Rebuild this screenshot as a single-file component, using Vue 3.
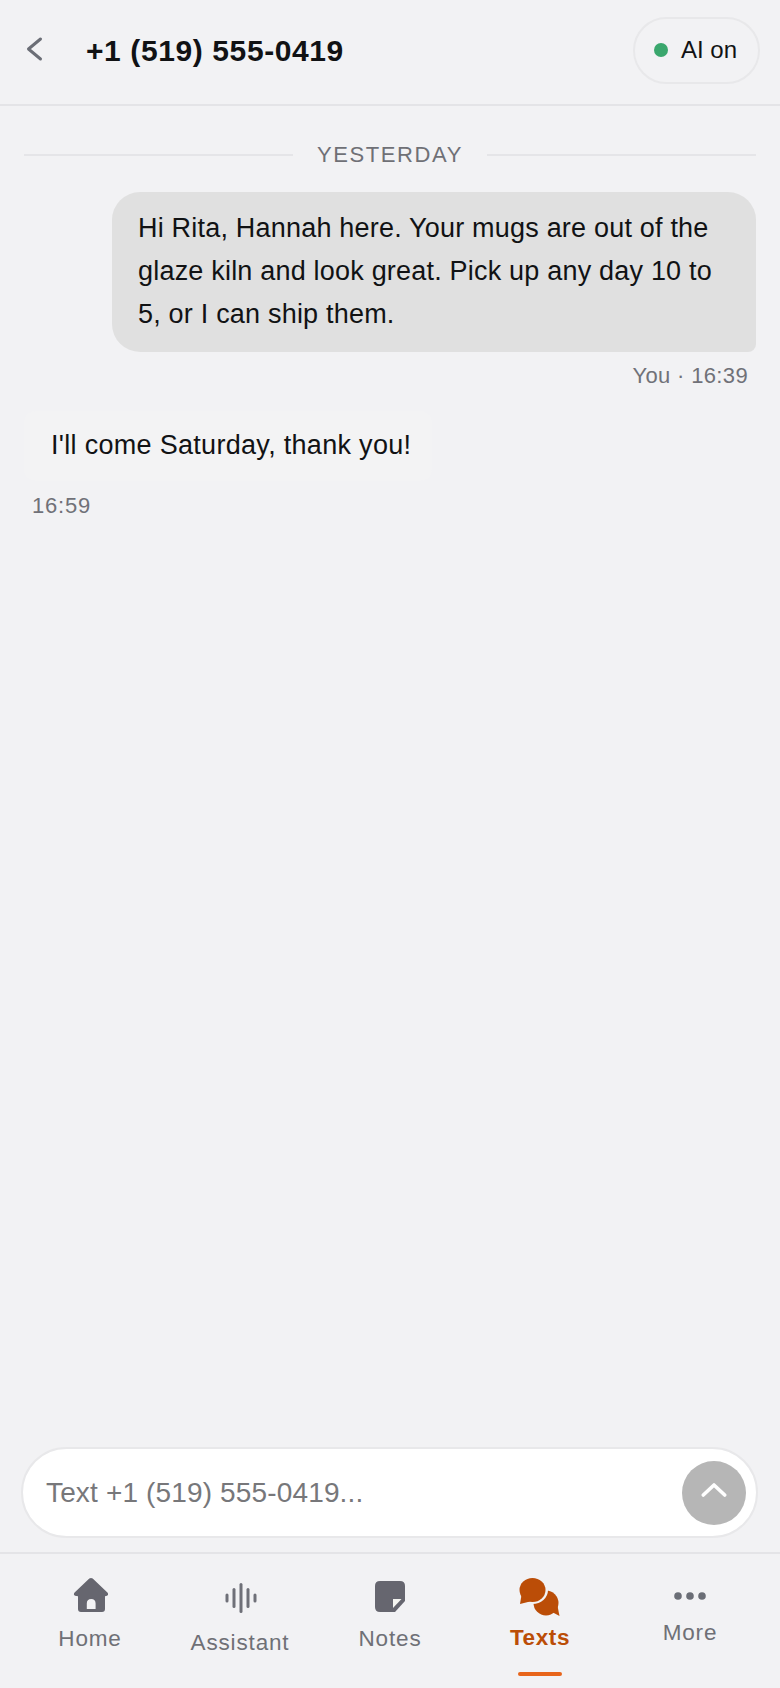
<template>
  <div class="screen">
    <header class="topbar">
      <button class="back" aria-label="Back">
        <svg width="18" height="28" viewBox="0 0 18 28" fill="none">
          <path d="M14.5 4 L2.5 14 L14.5 24" stroke="#6b6e76" stroke-width="3" stroke-linecap="round" stroke-linejoin="round" />
        </svg>
      </button>
      <h1 class="title">{{ phone }}</h1>
      <div class="ai-pill"><span class="dot"></span>AI on</div>
    </header>

    <main class="thread">
      <div class="day">
        <span class="rule"></span>
        <span class="day-label">YESTERDAY</span>
        <span class="rule"></span>
      </div>

      <div class="msg out">
        <div class="bubble">Hi Rita, Hannah here. Your mugs are out of the glaze kiln and look great. Pick up any day 10 to 5, or I can ship them.</div>
        <div class="meta">You · 16:39</div>
      </div>

      <div class="msg in">
        <div class="bubble">I'll come Saturday, thank you!</div>
        <div class="meta">16:59</div>
      </div>
    </main>

    <div class="composer">
      <div class="field">
        <span class="placeholder">Text {{ phone }}...</span>
        <button class="send" aria-label="Send">
          <svg width="26" height="16" viewBox="0 0 26 16" fill="none">
            <path d="M2.3 13 L13 3 L23.7 13" stroke="#fff" stroke-width="3.6" stroke-linecap="round" stroke-linejoin="round" />
          </svg>
        </button>
      </div>
    </div>

    <nav class="tabs">
      <div v-for="t in tabs" :key="t.name" class="tab" :class="[t.name.toLowerCase(), { active: t.active }]">
        <svg class="icon" :width="t.w" :height="t.h" :viewBox="`0 0 ${t.w} ${t.h}`" v-html="t.svg"></svg>
        <span class="label">{{ t.name }}</span>
        <span v-if="t.active" class="underline"></span>
      </div>
    </nav>
  </div>
</template>

<script setup>
const phone = '+1 (519) 555-0419'

const tabs = [
  {
    name: 'Home', w: 36, h: 36,
    svg: '<path fill-rule="evenodd" fill="#66666f" d="M17.3 1.6 Q19 0.4 20.7 1.6 L35.4 15.6 Q37 17.6 35 18.8 L33 19.2 L33 32 Q33 35 30 35 L9 35 Q6 35 6 32 L6 19.2 L3 18.8 Q1 17.6 2.6 15.6 Z M14.8 32 L23.6 32 L23.6 26.5 Q23.6 22 19.2 22 Q14.8 22 14.8 26.5 Z" />',
  },
  {
    name: 'Assistant', w: 32, h: 30,
    svg: '<g stroke="#6f7078" stroke-width="3" stroke-linecap="round"><path d="M2 12 L2 18" /><path d="M9 6.5 L9 23.5" /><path d="M16 1.5 L16 28.5" /><path d="M23 6.5 L23 23.5" /><path d="M30 12 L30 18" /></g>',
  },
  {
    name: 'Notes', w: 32, h: 32,
    svg: '<path fill="#66666f" d="M6 1 L26 1 Q31 1 31 6 L31 21 L21 32 L6 32 Q1 32 1 27 L1 6 Q1 1 6 1 Z" /><path fill="#f4f4f0" d="M19 19 L27.5 19 L19 28 Z" />',
  },
  {
    name: 'Texts', w: 42, h: 40,
    svg: '<g fill="#bb4d07"><circle cx="27" cy="26" r="12.5" /><path d="M33 35 L40.5 39 L38.5 29 Z" /></g><ellipse cx="13.5" cy="13" rx="15.5" ry="14" fill="#f2f2f4" /><g fill="#bb4d07"><ellipse cx="13.5" cy="13" rx="13" ry="12" /><path d="M2.5 18 L1 27 L11 24.5 Z" /></g>',
    active: true,
  },
  {
    name: 'More', w: 32, h: 10,
    svg: '<g fill="#6b6e76"><circle cx="4" cy="5" r="3.8" /><circle cx="16" cy="5" r="3.8" /><circle cx="28" cy="5" r="3.8" /></g>',
  },
]
</script>

<style>
html, body {
  margin: 0;
  background: #f2f2f4;
}
</style>

<style scoped>
.screen {
  width: 780px;
  height: 1688px;
  display: flex;
  flex-direction: column;
  background: #f2f2f4;
  font-family: "Liberation Sans", Arial, sans-serif;
  color: #111214;
  overflow: hidden;
}

.topbar {
  height: 106px;
  box-sizing: border-box;
  border-bottom: 2px solid #e4e4e7;
  display: flex;
  align-items: center;
  padding: 0 20px 4px 26px;
}
.back {
  border: 0;
  background: none;
  padding: 0;
  display: flex;
  margin: 0 42px 3px 0;
}
.title {
  flex: 1;
  margin: 2px 0 0;
  font-size: 30px;
  font-weight: 700;
  letter-spacing: 0.6px;
}
.ai-pill {
  width: 127px;
  height: 67px;
  box-sizing: border-box;
  border: 2px solid #e8e8ea;
  border-radius: 34px;
  display: flex;
  align-items: center;
  padding-left: 19px;
  font-size: 24px;
}
.dot {
  width: 14px;
  height: 14px;
  border-radius: 50%;
  background: #3aa76d;
  margin-right: 13px;
}

.thread {
  flex: 1;
  padding: 0 24px;
}
.day {
  display: flex;
  align-items: center;
  height: 40px;
  margin-top: 29px;
  gap: 24px;
}
.rule {
  flex: 1;
  height: 2px;
  background: #e5e5e8;
}
.day-label {
  font-size: 22px;
  letter-spacing: 1.6px;
  color: #6f7076;
}

.msg {
  display: flex;
  flex-direction: column;
}
.msg.out {
  align-items: flex-end;
  margin-top: 17px;
}
.msg.in {
  align-items: flex-start;
  margin-top: 22px;
}
.bubble {
  font-size: 27px;
  line-height: 43px;
  letter-spacing: 0.2px;
  box-sizing: border-box;
}
.out .bubble {
  width: 644px;
  padding: 15px 26px 16px;
  background: #e0e0e0;
  border-radius: 28px 28px 8px 28px;
}
.in .bubble {
  padding: 13px 21px 14px 27px;
  letter-spacing: 0.3px;
  background: #f3f3f4;
  border-radius: 12px;
}
.meta {
  font-size: 22px;
  color: #707178;
  letter-spacing: 0.35px;
}
.out .meta {
  margin: 11px 8px 0 0;
}
.in .meta {
  margin: 12px 0 0 8px;
  letter-spacing: 0.8px;
}

.composer {
  padding: 0 22px 14px 21px;
}
.field {
  height: 91px;
  box-sizing: border-box;
  background: #fff;
  border: 2px solid #e8e8ea;
  border-radius: 46px;
  display: flex;
  align-items: center;
  justify-content: space-between;
  padding: 0 10px 0 23px;
}
.placeholder {
  font-size: 28px;
  letter-spacing: 0.15px;
  color: #77777a;
}
.send {
  width: 64px;
  height: 64px;
  border: 0;
  border-radius: 50%;
  padding: 0 0 6px;
  background: #b6b6b6;
  display: flex;
  align-items: center;
  justify-content: center;
}

.tabs {
  height: 136px;
  box-sizing: border-box;
  border-top: 2px solid #e4e4e7;
  display: flex;
  padding: 0 15px;
}
.tab {
  flex: 1;
  display: flex;
  flex-direction: column;
  align-items: center;
  font-size: 22.5px;
  letter-spacing: 0.85px;
  color: #6f7076;
  position: relative;
}
.icon {
  display: block;
}
.label {
  line-height: 28px;
}
.home { padding-top: 23px; }
.home .label { margin-top: 12px; }
.assistant { padding-top: 29px; }
.assistant .icon { margin-left: 2px; }
.assistant .label { margin-top: 16px; }
.notes { padding-top: 26px; }
.notes .label { margin-top: 13px; }
.texts { padding-top: 23px; }
.texts .label { margin-top: 7px; }
.more { padding-top: 37px; }
.more .label { margin-top: 18px; }
.active {
  color: #bb4d07;
  font-weight: 700;
  letter-spacing: 0.6px;
}
.underline {
  position: absolute;
  bottom: 12px;
  width: 44px;
  height: 4px;
  border-radius: 2px;
  background: #e8651a;
}
</style>
